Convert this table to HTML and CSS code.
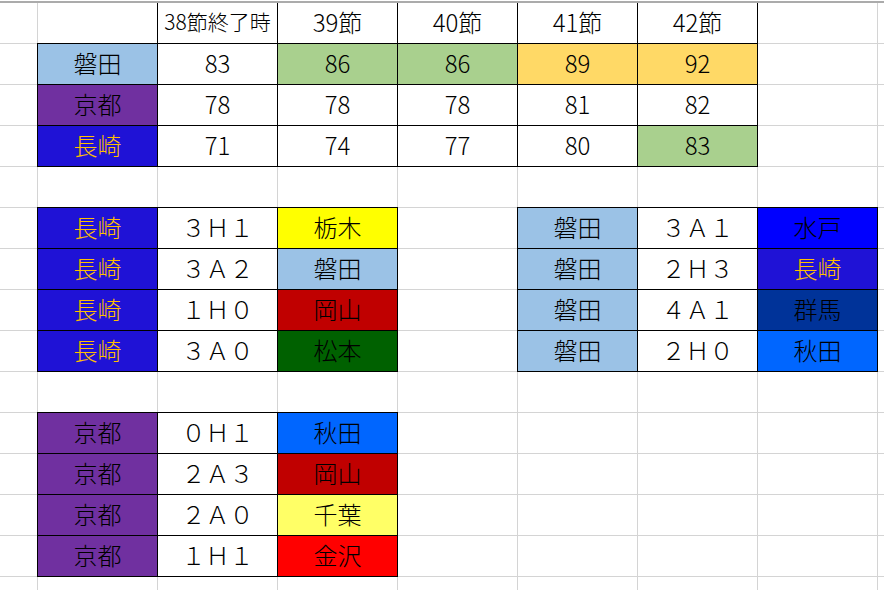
FILE: index.html
```html
<!DOCTYPE html>
<html lang="ja">
<head>
<meta charset="utf-8">
<title>Sheet</title>
<link rel="stylesheet" href="styles.css">
</head>
<body>
<div class="sheet">
  <!-- row 1 -->
  <div class="c"></div><div class="c"></div>
  <div class="c hd small">38節終了時</div>
  <div class="c hd">39節</div>
  <div class="c hd">40節</div>
  <div class="c hd">41節</div>
  <div class="c hd">42節</div>
  <div class="c"></div><div class="c"></div>
  <!-- row 2 -->
  <div class="c"></div>
  <div class="c b iwata">磐田</div>
  <div class="c b">83</div>
  <div class="c b green">86</div>
  <div class="c b green">86</div>
  <div class="c b orange">89</div>
  <div class="c b orange">92</div>
  <div class="c"></div><div class="c"></div>
  <!-- row 3 -->
  <div class="c"></div>
  <div class="c b kyoto">京都</div>
  <div class="c b">78</div>
  <div class="c b">78</div>
  <div class="c b">78</div>
  <div class="c b">81</div>
  <div class="c b">82</div>
  <div class="c"></div><div class="c"></div>
  <!-- row 4 -->
  <div class="c"></div>
  <div class="c b nagasaki">長崎</div>
  <div class="c b">71</div>
  <div class="c b">74</div>
  <div class="c b">77</div>
  <div class="c b">80</div>
  <div class="c b green">83</div>
  <div class="c"></div><div class="c"></div>
  <!-- row 5 -->
  <div class="c"></div><div class="c"></div><div class="c"></div><div class="c"></div><div class="c"></div><div class="c"></div><div class="c"></div><div class="c"></div><div class="c"></div>
  <!-- row 6 -->
  <div class="c"></div>
  <div class="c b nagasaki">長崎</div>
  <div class="c b">３Ｈ１</div>
  <div class="c b tochigi">栃木</div>
  <div class="c"></div>
  <div class="c b iwata">磐田</div>
  <div class="c b">３Ａ１</div>
  <div class="c b mito">水戸</div>
  <div class="c"></div>
  <!-- row 7 -->
  <div class="c"></div>
  <div class="c b nagasaki">長崎</div>
  <div class="c b">３Ａ２</div>
  <div class="c b iwata">磐田</div>
  <div class="c"></div>
  <div class="c b iwata">磐田</div>
  <div class="c b">２Ｈ３</div>
  <div class="c b nagasaki">長崎</div>
  <div class="c"></div>
  <!-- row 8 -->
  <div class="c"></div>
  <div class="c b nagasaki">長崎</div>
  <div class="c b">１Ｈ０</div>
  <div class="c b okayama">岡山</div>
  <div class="c"></div>
  <div class="c b iwata">磐田</div>
  <div class="c b">４Ａ１</div>
  <div class="c b gunma">群馬</div>
  <div class="c"></div>
  <!-- row 9 -->
  <div class="c"></div>
  <div class="c b nagasaki">長崎</div>
  <div class="c b">３Ａ０</div>
  <div class="c b matsumoto">松本</div>
  <div class="c"></div>
  <div class="c b iwata">磐田</div>
  <div class="c b">２Ｈ０</div>
  <div class="c b akita">秋田</div>
  <div class="c"></div>
  <!-- row 10 -->
  <div class="c"></div><div class="c"></div><div class="c"></div><div class="c"></div><div class="c"></div><div class="c"></div><div class="c"></div><div class="c"></div><div class="c"></div>
  <!-- row 11 -->
  <div class="c"></div>
  <div class="c b kyoto">京都</div>
  <div class="c b">０Ｈ１</div>
  <div class="c b akita">秋田</div>
  <div class="c"></div><div class="c"></div><div class="c"></div><div class="c"></div><div class="c"></div>
  <!-- row 12 -->
  <div class="c"></div>
  <div class="c b kyoto">京都</div>
  <div class="c b">２Ａ３</div>
  <div class="c b okayama">岡山</div>
  <div class="c"></div><div class="c"></div><div class="c"></div><div class="c"></div><div class="c"></div>
  <!-- row 13 -->
  <div class="c"></div>
  <div class="c b kyoto">京都</div>
  <div class="c b">２Ａ０</div>
  <div class="c b chiba">千葉</div>
  <div class="c"></div><div class="c"></div><div class="c"></div><div class="c"></div><div class="c"></div>
  <!-- row 14 -->
  <div class="c"></div>
  <div class="c b kyoto">京都</div>
  <div class="c b">１Ｈ１</div>
  <div class="c b kanazawa">金沢</div>
  <div class="c"></div><div class="c"></div><div class="c"></div><div class="c"></div><div class="c"></div>
  <!-- row 15 -->
  <div class="c"></div><div class="c"></div><div class="c"></div><div class="c"></div><div class="c"></div><div class="c"></div><div class="c"></div><div class="c"></div><div class="c"></div>
</div>
</body>
</html>
```
FILE: styles.css
```css
html, body {
  margin: 0;
  padding: 0;
  background: #ffffff;
}
body {
  width: 884px;
  height: 590px;
  overflow: hidden;
  font-family: "Noto Sans CJK JP", "Noto Sans", sans-serif;
  color: #000;
}
.sheet {
  margin-top: 1px;
  border-top: 2px solid #ababab;
  display: grid;
  grid-template-columns: 37px repeat(7, 119px) 6px;
  grid-template-rows: repeat(14, 40px) 13px;
  gap: 1px;
  background: #d4d4d4;
}
.c {
  background: #fff;
  display: flex;
  align-items: center;
  justify-content: center;
  padding-bottom: 3px;
  box-sizing: border-box;
  font-size: 24px;
  font-weight: 300;
  line-height: 1;
  white-space: nowrap;
  overflow: visible;
}
.b {
  outline: 1px solid #000;
}
.hd {
  outline: 1px solid #000;
  clip-path: inset(0 -1px -1px -1px);
}
.small { font-size: 21px; }
.iwata { background: #9bc2e6; }
.kyoto { background: #7030a0; }
.nagasaki { background: #1f12d6; color: #ffc000; }
.green { background: #a9d08e; }
.orange { background: #ffd966; }
.tochigi { background: #ffff00; }
.okayama { background: #c00000; }
.matsumoto { background: #006100; }
.mito { background: #0000ff; }
.gunma { background: #003399; }
.akita { background: #0066ff; }
.chiba { background: #ffff66; }
.kanazawa { background: #ff0000; }
```
